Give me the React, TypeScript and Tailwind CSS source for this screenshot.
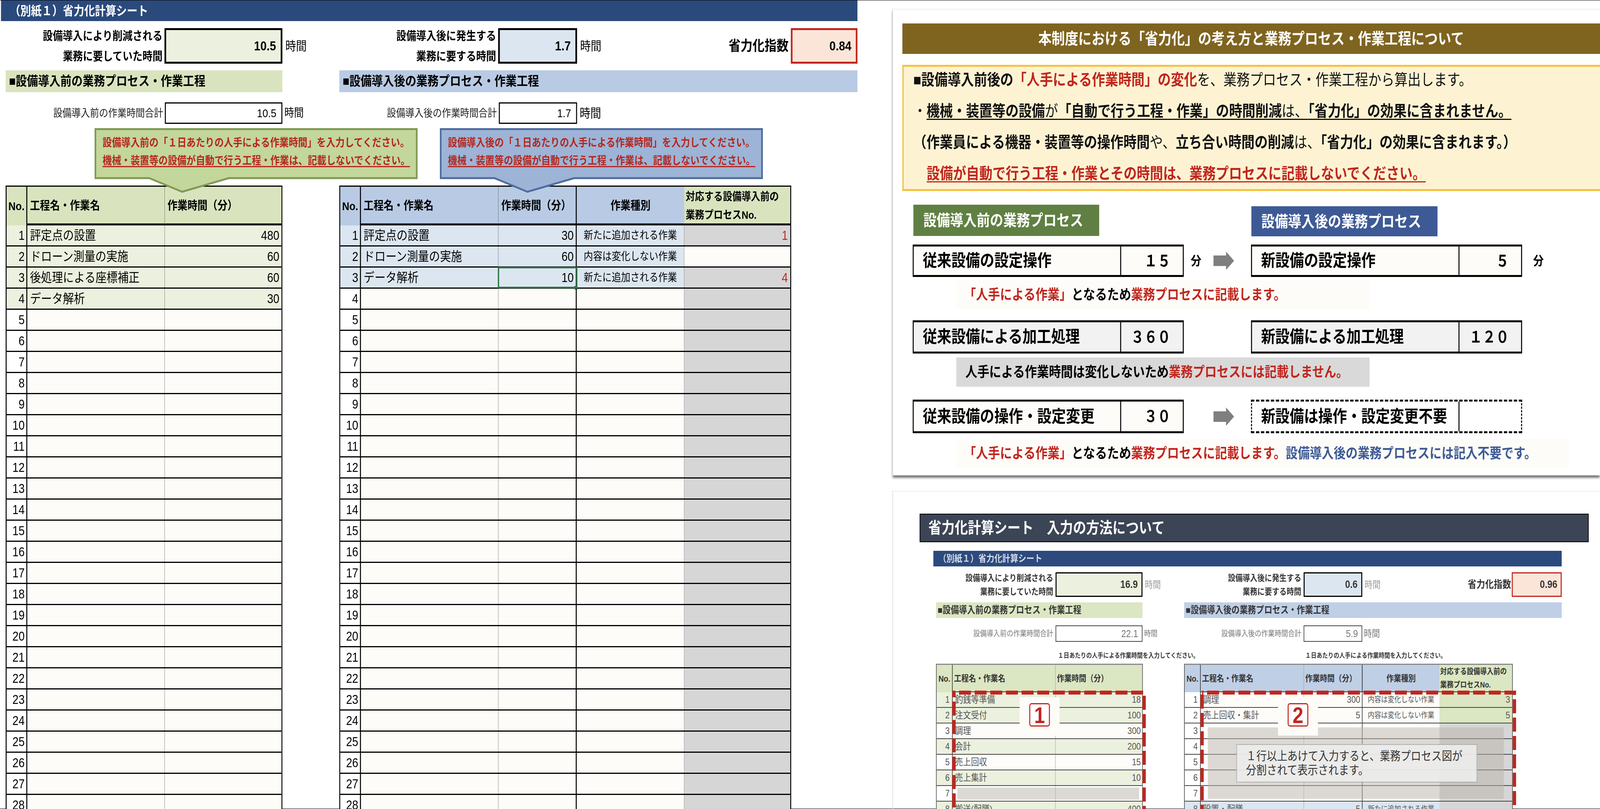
import { useState, type ReactNode } from 'react'

const RED = 'text-[#c0261e]'

const beforeRows: [string, number][] = [
  ['評定点の設置', 480],
  ['ドローン測量の実施', 60],
  ['後処理による座標補正', 60],
  ['データ解析', 30],
]

const afterRows: [string, number, string, string][] = [
  ['評定点の設置', 30, '新たに追加される作業', '1'],
  ['ドローン測量の実施', 60, '内容は変化しない作業', ''],
  ['データ解析', 10, '新たに追加される作業', '4'],
]

const rowNumbers = Array.from({ length: 28 }, (_, i) => i + 1)

function Callout({ shape, lines }: { shape: string; lines: [string, string] }) {
  return (
    <div className="absolute top-[11px] h-[166px] w-[970px]">
      <svg className={`absolute inset-0 ${shape}`} width="970" height="166" viewBox="0 0 970 166">
        <polygon points="2.5,2.5 967.5,2.5 967.5,128 403,128 263,163 164,128 2.5,128" strokeWidth="5" />
      </svg>
      <div className="absolute left-[24px] top-[15px] whitespace-nowrap text-[28px] font-bold leading-[46px] text-[#b5261e]">
        <p>{lines[0]}</p>
        <p className="underline decoration-[3px] underline-offset-[4px] [text-decoration-skip-ink:none]">{lines[1]}</p>
      </div>
    </div>
  )
}

function SummaryLabel({ children }: { children: ReactNode }) {
  return <div className="w-[471px] text-right text-[30px] font-bold leading-[52px] text-black">{children}</div>
}

function BeforeSheet() {
  return (
    <div className="w-[1002px] shrink-0">
      <div className="mt-[18px] flex h-[91px] items-center">
        <SummaryLabel>
          設備導入により削減される
          <br />
          業務に要していた時間
        </SummaryLabel>
        <div className="ml-[6px] flex h-full w-[354px] items-center justify-end border-[5px] border-black bg-[#ebf1de] pr-[14px] text-[34px] font-bold">
          10.5
        </div>
        <span className="ml-[9px] text-[32px]">時間</span>
      </div>
      <div className="mt-[17px] flex h-[56px] w-[831px] items-center bg-[#d9e4bf] pl-[10px] text-[33.5px] font-bold">
        ■設備導入前の業務プロセス・作業工程
      </div>
      <div className="mt-[26px] flex h-[55px] items-center">
        <div className="w-[473px] text-right text-[27.5px] text-[#222]">設備導入前の作業時間合計</div>
        <div className="ml-[5px] flex h-full w-[353px] items-center justify-end border-[3px] border-black bg-white pr-[15px] text-[30px]">
          10.5
        </div>
        <span className="ml-[6px] text-[29px]">時間</span>
      </div>
      <div className="relative h-[158px]">
        <div className="absolute left-[267px]">
          <Callout
            shape="fill-[#c3d69b] stroke-[#7f9a55]"
            lines={[
              '設備導入前の「１日あたりの人手による作業時間」を入力してください。',
              '機械・装置等の設備が自動で行う工程・作業は、記載しないでください。',
            ]}
          />
        </div>
      </div>
      <div className="w-[831px] border-l-[3px] border-r-[3px] border-t-[3px] border-black">
        <div className="flex h-[99px] bg-[#d9e4bf] text-[30px] font-bold">
          <div className="flex w-[62px] items-center justify-center border-r-[3px] border-black">No.</div>
          <div className="flex w-[413px] items-center border-b-[5px] border-r border-b-black border-r-black pl-[8px] [border-right-style:dotted]">
            工程名・作業名
          </div>
          <div className="flex flex-1 items-center border-b-[5px] border-black pl-[8px]">作業時間（分）</div>
        </div>
        {rowNumbers.map((n) => {
          const row = beforeRows[n - 1]
          return (
            <div key={n} className={`flex h-[54px] border-b-[3px] border-black text-[33px] ${row ? 'bg-[#ebf1de]' : 'bg-[#fefcf8]'}`}>
              <div className={`flex w-[62px] items-center justify-end border-r-[3px] border-black pr-[5px] ${row ? '' : 'bg-white'}`}>{n}</div>
              <div className="flex w-[413px] items-center whitespace-nowrap border-r border-dotted border-black pl-[8px]">{row?.[0]}</div>
              <div className="flex flex-1 items-center justify-end pr-[6px]">{row?.[1]}</div>
            </div>
          )
        })}
      </div>
    </div>
  )
}

function AfterSheet() {
  return (
    <div className="w-[1556px] shrink-0">
      <div className="mt-[18px] flex h-[91px] items-center">
        <SummaryLabel>
          設備導入後に発生する
          <br />
          業務に要する時間
        </SummaryLabel>
        <div className="ml-[6px] flex h-full w-[237px] items-center justify-end border-[5px] border-black bg-[#dce6f1] pr-[14px] text-[34px] font-bold">
          1.7
        </div>
        <span className="ml-[9px] text-[32px]">時間</span>
        <span className="ml-auto text-[36px] font-bold">省力化指数</span>
        <div className="ml-[7px] flex h-full w-[200px] items-center justify-end border-[5px] border-[#c0261e] bg-[#fae5d8] pr-[13px] text-[34px] font-bold">
          0.84
        </div>
      </div>
      <div className="mt-[17px] flex h-[56px] items-center bg-[#b9cbe4] pl-[10px] text-[33.5px] font-bold">
        ■設備導入後の業務プロセス・作業工程
      </div>
      <div className="mt-[26px] flex h-[55px] items-center">
        <div className="w-[473px] text-right text-[27.5px] text-[#222]">設備導入後の作業時間合計</div>
        <div className="ml-[6px] flex h-full w-[235px] items-center justify-end border-[3px] border-black bg-white pr-[15px] text-[30px]">
          1.7
        </div>
        <span className="ml-[8px] text-[32px]">時間</span>
      </div>
      <div className="relative h-[158px]">
        <div className="absolute left-[302px]">
          <Callout
            shape="fill-[#9db4d6] stroke-[#4f6d9f]"
            lines={[
              '設備導入後の「１日あたりの人手による作業時間」を入力してください。',
              '機械・装置等の設備が自動で行う工程・作業は、記載しないでください。',
            ]}
          />
        </div>
      </div>
      <div className="w-[1357px] border-l-[3px] border-r-[3px] border-t-[3px] border-black">
        <div className="flex h-[99px] bg-[#b9cbe4] text-[30px] font-bold">
          <div className="flex w-[62px] items-center justify-center border-r-[3px] border-black">No.</div>
          <div className="flex w-[413px] items-center border-b-[5px] border-r border-b-black border-r-black pl-[8px] [border-right-style:dotted]">
            工程名・作業名
          </div>
          <div className="flex w-[235px] items-center border-b-[5px] border-r-[3px] border-black pl-[8px]">作業時間（分）</div>
          <div className="flex w-[323px] items-center justify-center border-b-[5px] border-black">作業種別</div>
          <div className="flex-1 border-b-[5px] border-black bg-[#d9e4bf] pl-[4px] pt-[2px] text-[28px] leading-[47px]">
            対応する設備導入前の
            <br />
            業務プロセスNo.
          </div>
        </div>
        {rowNumbers.map((n) => {
          const row = afterRows[n - 1]
          return (
            <div key={n} className={`flex h-[54px] border-b-[3px] border-black text-[33px] ${row ? 'bg-[#dce6f1]' : 'bg-[#fefcf8]'}`}>
              <div className={`flex w-[62px] items-center justify-end border-r-[3px] border-black pr-[5px] ${row ? '' : 'bg-white'}`}>{n}</div>
              <div className="flex w-[413px] items-center whitespace-nowrap border-r border-dotted border-black pl-[8px]">{row?.[0]}</div>
              <div className={`relative flex w-[235px] items-center justify-end border-r-[3px] border-black pr-[6px] ${n === 3 ? 'outline-[4px] -outline-offset-2 outline-[#2f7548]' : ''}`}>
                {row?.[1]}
                {n === 3 && <span className="absolute -bottom-[5px] -right-[5px] h-[9px] w-[9px] bg-[#2f7548]" />}
              </div>
              <div className="flex w-[323px] items-center justify-center border-r border-dotted border-black text-[28px]">{row?.[2]}</div>
              <div className={`flex flex-1 items-center justify-end pr-[7px] ${RED} ${n === 2 ? 'bg-[#fefcf8]' : 'bg-[#d6d6d6]'}`}>{row?.[3]}</div>
            </div>
          )
        })}
      </div>
    </div>
  )
}

function ExampleBox({ name, value, tone, dashed }: { name: string; value?: string; tone: string; dashed?: boolean }) {
  return (
    <div
      className={`flex h-full w-[814px] shrink-0 text-[43px] font-bold ${tone} ${
        dashed ? 'border-x-[3px] border-y-[5px] border-dashed border-black' : 'border-x-[3px] border-y-[5px] border-black'
      }`}
    >
      <div className="flex w-[620px] items-center whitespace-nowrap pl-[27px]">{name}</div>
      <div className="flex flex-1 items-center justify-end border-l-[3px] border-black pr-[36px] text-[40px]">{value}</div>
    </div>
  )
}

function GrayArrow() {
  return (
    <svg width="62" height="47" viewBox="0 0 62 47" className="shrink-0">
      <polygon points="0,10 38,10 38,0 62,23.5 38,47 38,37 0,37" className="fill-[#7f7f7f]" />
    </svg>
  )
}

function ConceptPanel() {
  return (
    <div className="h-[1194px] border-l-2 border-t border-[#dedede] pl-[28px] pt-[36px] shadow-[0_6px_6px_rgba(0,0,0,0.55)]">
      <div className="flex h-[78px] items-center justify-center bg-[#7f6420] text-[40px] font-bold text-white">
        本制度における「省力化」の考え方と業務プロセス・作業工程について
      </div>
      <div className="mt-[28px] flex h-[323px] flex-col justify-center border-y-[5px] border-l-[4px] border-[#f5c242] bg-[#fdf3d3] pb-[7px] pl-[29px] text-[39.5px] leading-[80px] text-[#111]">
        <p>
          <b>■設備導入前後の</b>
          <b className={RED}>「人手による作業時間」の変化</b>を、業務プロセス・作業工程から算出します。
        </p>
        <p>
          ・
          <span className="underline decoration-[3px] underline-offset-[6px] [text-decoration-skip-ink:none]">
            <b>機械・装置等の設備</b>が<b>「自動で行う工程・作業」の時間削減</b>は、<b>「省力化」の効果に含まれません。</b>
          </span>
        </p>
        <p>
          <b>（作業員による機器・装置等の操作時間</b>や、<b>立ち合い時間の削減</b>は、<b>「省力化」の効果に含まれます。）</b>
        </p>
        <p className={`pl-[40px] font-bold underline decoration-[3px] underline-offset-[6px] [text-decoration-skip-ink:none] ${RED}`}>
          設備が自動で行う工程・作業とその時間は、業務プロセスに記載しないでください。
        </p>
      </div>
      <div className="ml-[31px]">
        <div className="mt-[35px] flex items-start text-[40px] font-bold text-white">
          <div className="ml-[2px] flex h-[80px] w-[558px] items-center bg-[#5f8042] pl-[30px]">設備導入前の業務プロセス</div>
          <div className="ml-[457px] mt-[4px] flex h-[77px] w-[559px] items-center bg-[#3e5a96] pl-[30px]">設備導入後の業務プロセス</div>
        </div>
        <div className="mt-[21px] flex h-[83px] items-center">
          <ExampleBox name="従来設備の設定操作" value="１５" tone="bg-[#fefcf8]" />
          <div className="flex w-[202px] items-center pl-[21px]">
            <span className="w-[32px] text-[32px] font-bold">分</span>
            <span className="ml-[36px]">
              <GrayArrow />
            </span>
          </div>
          <ExampleBox name="新設備の設定操作" value="５" tone="bg-[#fefcf8]" />
          <span className="ml-[33px] text-[32px] font-bold">分</span>
        </div>
        <div className="ml-[131px] mt-[9px] flex h-[74px] w-[1241px] items-center bg-[#fefcf8] pl-[23px] text-[36px] font-bold">
          <span className={RED}>「人手による作業」</span>となるため<span className={RED}>業務プロセスに記載します。</span>
        </div>
        <div className="mt-[28px] flex h-[85px]">
          <ExampleBox name="従来設備による加工処理" value="３６０" tone="bg-[#f2f2f2]" />
          <div className="w-[202px]" />
          <ExampleBox name="新設備による加工処理" value="１２０" tone="bg-[#f2f2f2]" />
        </div>
        <div className="ml-[131px] mt-[10px] flex h-[75px] w-[1241px] items-center bg-[#d9d9d9] pl-[27px] text-[36px] font-bold">
          人手による作業時間は変化しないため<span className={RED}>業務プロセスには記載しません。</span>
        </div>
        <div className="mt-[33px] flex h-[86px] items-center">
          <ExampleBox name="従来設備の操作・設定変更" value="３０" tone="bg-[#fefcf8]" />
          <div className="flex w-[202px] items-center pl-[89px]">
            <GrayArrow />
          </div>
          <ExampleBox name="新設備は操作・設定変更不要" tone="bg-white" dashed />
        </div>
        <div className="ml-[131px] mt-[15px] flex h-[74px] w-[1839px] items-center bg-[#fefcf8] pl-[23px] text-[36px] font-bold">
          <span className={RED}>「人手による作業」</span>となるため<span className={RED}>業務プロセスに記載します。</span>
          <span className="text-[#3e5a96]">設備導入後の業務プロセスには記入不要です。</span>
        </div>
      </div>
    </div>
  )
}

const miniBefore: [string, number, string][] = [
  ['釣銭等準備', 18, 'bg-[#ebf1de]'],
  ['注文受付', 100, 'bg-[#ebf1de]'],
  ['調理', 300, 'bg-[#fefcf8]'],
  ['会計', 200, 'bg-[#ebf1de]'],
  ['売上回収', 15, 'bg-[#fefcf8]'],
  ['売上集計', 10, 'bg-[#ebf1de]'],
]

const miniAfter: [string, string, string, string][] = [
  ['調理', '300', '内容は変化しない作業', '3'],
  ['売上回収・集計', '5', '内容は変化しない作業', '5'],
]

function DashedFrame({ width, rectWidth }: { width: string; rectWidth: number }) {
  return (
    <svg className={`absolute left-[47px] top-[66px] h-[340px] ${width}`}>
      <rect
        x="5"
        y="5"
        width={rectWidth}
        height="500"
        fill="none"
        stroke="#c0261e"
        strokeWidth="10"
        strokeDasharray="36 11"
        strokeDashoffset="32"
      />
    </svg>
  )
}

function NumberBadge({ left, n }: { left: string; n: number }) {
  return (
    <div className={`absolute top-[83px] flex h-[98px] w-[120px] items-start justify-center bg-[#fefcf8] pt-[15px] ${left}`}>
      <div className="flex h-[60px] w-[62px] items-center justify-center rounded-[7px] border-[3px] border-[#c0261e] bg-white text-[58px] font-bold text-[#c0261e]">
        {n}
      </div>
    </div>
  )
}

function MiniSheet() {
  return (
    <div className="ml-[121px] w-[1887px]">
      <div className="mt-[22px] flex h-[40px] items-center bg-[#2c4a7e] pl-[15px] text-[24px] font-bold text-[#d5dbe6]">
        （別紙１）省力化計算シート
      </div>
      <div className="mt-0 flex pl-[8px] text-[#333]">
        <div className="w-[745px] shrink-0">
          <div className="mt-[15px] flex h-[63px] items-center">
            <div className="w-[352px] text-right text-[22px] font-bold leading-[35px]">
              設備導入により削減される
              <br />
              業務に要していた時間
            </div>
            <div className="ml-[7px] flex h-full w-[261px] items-center justify-end border-[3px] border-black bg-[#ebf1de] pr-[11px] text-[27px] font-bold">
              16.9
            </div>
            <span className="ml-[7px] text-[24px] text-[#999]">時間</span>
          </div>
          <div className="mt-[14px] flex h-[40px] w-[620px] items-center bg-[#dbe6c2] pl-[5px] text-[24.5px] font-bold">
            ■設備導入前の業務プロセス・作業工程
          </div>
          <div className="mt-[19px] flex h-[42px] items-center">
            <div className="w-[352px] text-right text-[20px] text-[#777]">設備導入前の作業時間合計</div>
            <div className="ml-[7px] flex h-full w-[261px] items-center justify-end border-2 border-[#444] bg-white pr-[11px] text-[26px] text-[#777]">
              22.1
            </div>
            <span className="ml-[5px] text-[20px] text-[#777]">時間</span>
          </div>
          <div className="h-[56px] whitespace-nowrap pl-[366px] pt-[24px] text-[17px] font-bold leading-[24px]">
            １日あたりの人手による作業時間を入力してください。
          </div>
          <div className="relative w-[621px] border-x-2 border-t-[3px] border-x-[#555] border-t-[#8a8a8a]">
            <div className="flex h-[70px] bg-[#dbe6c2] text-[22px] font-bold">
              <div className="flex w-[48px] items-center justify-center border-r-2 border-[#444]">No.</div>
              <div className="flex w-[309px] items-center border-b-2 border-r border-b-[#333] border-r-[#999] pl-[4px]">工程名・作業名</div>
              <div className="flex flex-1 items-center border-b-2 border-[#333] pl-[4px]">作業時間（分）</div>
            </div>
            {[1, 2, 3, 4, 5, 6, 7, 8].map((n) => {
              const row = miniBefore[n - 1]
              const tone = row ? row[2] : n === 8 ? 'bg-[#ebf1de]' : 'bg-white'
              const whiteNo = n === 3 || n === 5 || n === 7
              return (
                <div key={n} className={`flex h-[40px] border-b-2 border-[#444] text-[24px] text-[#555] ${tone}`}>
                  <div className={`flex w-[48px] items-center justify-end border-r-2 border-[#444] pr-[7px] ${whiteNo ? 'bg-white' : ''}`}>{n}</div>
                  <div className="flex w-[309px] items-center border-r border-[#999] pl-[7px]">{row ? row[0] : n === 8 ? '搬送(配膳)' : ''}</div>
                  <div className="flex flex-1 items-center justify-end pr-[4px]">{row ? row[1] : n === 8 ? 400 : ''}</div>
                </div>
              )
            })}
            <div className="absolute left-[62px] top-[314px] h-[31px] w-[546px] bg-[#b9b4ab]/50" />
            <NumberBadge left="left-[249px]" n={1} />
            <DashedFrame width="w-[590px]" rectWidth={571} />
          </div>
        </div>
        <div className="w-[1134px] shrink-0">
          <div className="mt-[15px] flex h-[63px] items-center">
            <div className="w-[352px] text-right text-[22px] font-bold leading-[35px]">
              設備導入後に発生する
              <br />
              業務に要する時間
            </div>
            <div className="ml-[7px] flex h-full w-[176px] items-center justify-end border-[3px] border-black bg-[#dce6f1] pr-[11px] text-[27px] font-bold">
              0.6
            </div>
            <span className="ml-[7px] text-[24px] text-[#999]">時間</span>
            <span className="ml-auto text-[26px] font-bold">省力化指数</span>
            <div className="ml-[2px] flex h-full w-[150px] items-center justify-end border-[3px] border-[#c0261e] bg-[#fae5d8] pr-[10px] text-[27px] font-bold">
              0.96
            </div>
          </div>
          <div className="mt-[14px] flex h-[40px] items-center bg-[#bfcfe6] pl-[5px] text-[24.5px] font-bold">
            ■設備導入後の業務プロセス・作業工程
          </div>
          <div className="mt-[19px] flex h-[42px] items-center">
            <div className="w-[352px] text-right text-[20px] text-[#777]">設備導入後の作業時間合計</div>
            <div className="ml-[7px] flex h-full w-[176px] items-center justify-end border-2 border-[#444] bg-white pr-[11px] text-[26px] text-[#777]">
              5.9
            </div>
            <span className="ml-[5px] text-[24px] text-[#777]">時間</span>
          </div>
          <div className="h-[56px] whitespace-nowrap pl-[364px] pt-[24px] text-[17px] font-bold leading-[24px]">
            １日あたりの人手による作業時間を入力してください。
          </div>
          <div className="relative w-[987px] border-x-2 border-t-[3px] border-x-[#555] border-t-[#8a8a8a]">
            <div className="flex h-[70px] bg-[#bfcfe6] text-[22px] font-bold">
              <div className="flex w-[48px] items-center justify-center border-r-2 border-[#444]">No.</div>
              <div className="flex w-[310px] items-center border-b-2 border-r border-b-[#333] border-r-[#999] pl-[4px]">工程名・作業名</div>
              <div className="flex w-[176px] items-center border-b-2 border-r-2 border-[#333] pl-[4px]">作業時間（分）</div>
              <div className="flex w-[231px] items-center justify-center border-b-2 border-[#333]">作業種別</div>
              <div className="flex-1 border-b-2 border-[#333] bg-[#dbe6c2] pl-[2px] text-[20px] leading-[34px]">
                対応する設備導入前の
                <br />
                業務プロセスNo.
              </div>
            </div>
            {[1, 2, 3, 4, 5, 6, 7, 8].map((n) => {
              const row = miniAfter[n - 1]
              const last = n === 8
              return (
                <div key={n} className={`flex h-[40px] border-b-2 border-[#444] text-[24px] text-[#555] ${row ? 'bg-[#fefcf8]' : last ? 'bg-[#dce6f1]' : 'bg-white'}`}>
                  <div className={`flex w-[48px] items-center justify-end border-r-2 border-[#444] pr-[7px] ${row ? 'bg-white' : ''}`}>{n}</div>
                  <div className="flex w-[310px] items-center border-r border-[#999] pl-[7px]">{row ? row[0] : last ? '設置・配膳' : ''}</div>
                  <div className="flex w-[176px] items-center justify-end border-r-2 border-[#444] pr-[5px]">{row ? row[1] : last ? '5' : ''}</div>
                  <div className="flex w-[231px] items-center justify-center text-[20px]">{row ? row[2] : last ? '新たに追加される作業' : ''}</div>
                  <div className={`flex flex-1 items-center justify-end pr-[6px] ${row ? 'bg-[#dbe6c2]' : 'bg-[#d6d6d6]'}`}>{row?.[3]}</div>
                </div>
              )
            })}
            <div className="absolute left-[69px] top-[160px] h-[183px] w-[889px] bg-[#b9b4ab]/50" />
            <div className="absolute left-[155px] top-[203px] flex h-[98px] w-[723px] flex-col justify-center border-2 border-dotted border-[#777] bg-[#ececec]/90 pl-[27px] text-[31px] leading-[36px] text-[#333]">
              <p>１行以上あけて入力すると、業務プロセス図が</p>
              <p>分割されて表示されます。</p>
            </div>
            <NumberBadge left="left-[280px]" n={2} />
            <DashedFrame width="w-[960px]" rectWidth={938} />
          </div>
        </div>
      </div>
    </div>
  )
}

function HowToPanel() {
  return (
    <div className="mt-[40px] border-l-2 border-t border-[#dedede] pt-[57px]">
      <div className="ml-[80px] mr-[34px] flex h-[73px] items-center border-2 border-black bg-[#3b4556] pl-[24px] text-[39.5px] font-bold text-white">
        省力化計算シート　入力の方法について
      </div>
      <MiniSheet />
    </div>
  )
}

export default function App() {
  // the window can be narrower than the 4805px the sheet was measured at
  const [fit] = useState(() => Math.min(1, window.innerWidth / 4805))

  return (
    <div className="h-[2071px] w-full overflow-hidden">
      <div
        className="flex h-[2071px] w-[4805px] origin-top-left border-y border-black bg-white font-['Liberation_Sans','Noto_Sans_CJK_JP',sans-serif] text-black"
        style={{ transform: `scaleX(${fit})` }}
      >
        <div className="w-[2650px] shrink-0">
          <div className="ml-[3px] flex h-[53px] w-[2572px] items-center bg-[#2b4a7c] pl-[26px] text-[32px] font-bold text-white">
            （別紙１）省力化計算シート
          </div>
          <div className="flex pl-[17px]">
            <BeforeSheet />
            <AfterSheet />
          </div>
        </div>
        <div className="flex-1 pl-[30px] pt-[22px]">
          <ConceptPanel />
          <HowToPanel />
        </div>
      </div>
    </div>
  )
}
